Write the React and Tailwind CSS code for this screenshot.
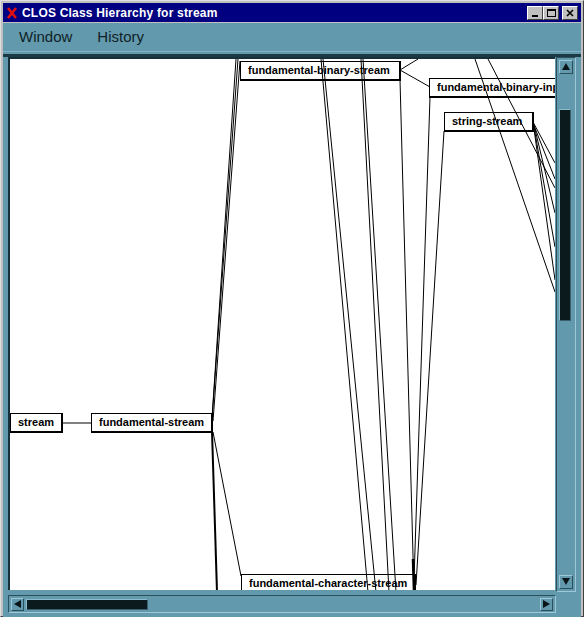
import React from 'react'

const nodes = [
  { label: '', left: 420, top: -20, width: 200 },
  { label: 'stream', left: 0, top: 354, width: 53 },
  { label: 'fundamental-stream', left: 81, top: 354, width: 122 },
  { label: 'fundamental-binary-stream', left: 230, top: 2, width: 161 },
  { label: 'fundamental-binary-input-stream', left: 419, top: 19, width: 200 },
  { label: 'string-stream', left: 434, top: 53, width: 90 },
  { label: 'fundamental-character-stream', left: 231, top: 515, width: 175 },
]

// edges in canvas coordinates
const edges = [
  [202, 359, 226, 0],
  [202, 360, 228, 0],
  [203, 362, 230, 2],
  [202, 372, 207, 533, 2],
  [203, 373, 231, 517],
  [53, 364, 81, 364],
  [311, 0, 358, 533],
  [313, 0, 366, 533],
  [351, 0, 379, 533],
  [353, 0, 386, 533],
  [390, 21, 404, 533],
  [420, 38, 404, 521],
  [434, 72, 406, 526],
  [403, 500, 404, 533, 2.5],
  [390, 11, 408, 0],
  [390, 11, 420, 28],
  [465, 0, 545, 233],
  [478, 0, 545, 129],
  [523, 63, 545, 104],
  [523, 64, 545, 120],
  [524, 66, 545, 154],
  [524, 68, 545, 188],
  [524, 70, 545, 221],
]

function Node({ label, left, top, width }) {
  return (
    <div
      className="absolute h-[20px] bg-white border border-black border-r-2 border-b-2 pl-[7px] flex items-center whitespace-nowrap overflow-hidden text-[11px] font-bold text-black leading-none"
      style={{ left, top, width, fontFamily: '"Liberation Sans", Arial, sans-serif' }}
    >
      {label}
    </div>
  )
}

function Arrow({ dir }) {
  const pts = {
    up: '1,8 5,1 9,8',
    down: '1,1 5,8 9,1',
    right: '1,1 8,5 1,9',
    left: '8,1 1,5 8,9',
  }[dir]
  return (
    <svg width="10" height="10" viewBox="0 0 10 10">
      <polygon points={pts} fill="#0b1418" />
    </svg>
  )
}

function TitleButton({ children }) {
  return (
    <div className="w-[16px] h-[14px] bg-[#c0c0c0] border border-t-white border-l-white border-r-[#404040] border-b-[#404040] flex items-center justify-center">
      {children}
    </div>
  )
}

export default function App() {
  return (
    <div
      className="w-[584px] h-[617px] bg-[#c0c0c0] border border-t-[#dfdfdf] border-l-[#dfdfdf] border-r-[#404040] border-b-[#404040] p-[2px] flex flex-col"
      style={{ fontFamily: '"Liberation Sans", Arial, sans-serif' }}
    >
      {/* title bar */}
      <div className="h-[19px] bg-[#000080] flex items-center pl-[3px] pr-[3px] shrink-0">
        <svg width="12" height="12" viewBox="0 0 12 12" className="mr-[4px]">
          <path d="M2 1 L10 11 M10 1 L2 11" stroke="#e01010" strokeWidth="2.6" />
        </svg>
        <span className="text-white text-[12px] font-bold tracking-[0.2px]">CLOS Class Hierarchy for stream</span>
        <div className="ml-auto flex items-center">
          <TitleButton>
            <div className="w-[6px] h-[2px] bg-black mt-[6px]" />
          </TitleButton>
          <TitleButton>
            <div className="w-[9px] h-[8px] border border-black border-t-2" />
          </TitleButton>
          <div className="w-[3px]" />
          <TitleButton>
            <svg width="8" height="8" viewBox="0 0 8 8">
              <path d="M1 1 L7 7 M7 1 L1 7" stroke="#000" strokeWidth="1.6" />
            </svg>
          </TitleButton>
        </div>
      </div>

      {/* body */}
      <div className="flex-1 mt-[1px] bg-[#6399ad] flex flex-col">
        <div className="h-[29px] flex items-center gap-[25px] pl-[16px] text-[15px] font-medium text-[#0e1f26] shrink-0 border-b border-[#7fb2c4]">
          <span>Window</span>
          <span>History</span>
        </div>

        <div className="mt-[2px] border-t-[3px] border-[#1c3a45] px-[5px] pb-[5px] flex-1 flex flex-col">
          <div className="flex">
            {/* canvas */}
            <div className="relative w-[548px] h-[533px] bg-white border-t-2 border-l-2 border-[#17313b] overflow-hidden">
              {nodes.map((n, i) => (
                <Node key={i} {...n} />
              ))}
              <svg className="absolute left-0 top-0 pointer-events-none" width="546" height="533" viewBox="0 0 546 533">
                {edges.map(([x1, y1, x2, y2, w], i) => (
                  <line key={i} x1={x1} y1={y1} x2={x2} y2={y2} stroke="#000" strokeWidth={w || 1} />
                ))}
              </svg>
            </div>

            {/* vertical scrollbar */}
            <div className="w-[20px] h-[535px] ml-[1px] bg-[#6399ad] border border-t-[#2c4f5c] border-l-[#2c4f5c] border-r-[#9cc8d8] border-b-[#9cc8d8] flex flex-col items-center py-[2px]">
              <div className="w-[14px] h-[14px] flex items-center justify-center border border-t-[#9cc8d8] border-l-[#9cc8d8] border-r-[#2c4f5c] border-b-[#2c4f5c]">
                <Arrow dir="up" />
              </div>
              <div className="w-[14px] flex-1 flex flex-col pt-[35px]">
                <div className="w-[12px] h-[212px] bg-[#0b1a1d] border border-t-[#8cbccc] border-l-[#8cbccc] border-r-[#3a6070] border-b-[#3a6070]" />
              </div>
              <div className="w-[14px] h-[14px] flex items-center justify-center border border-t-[#9cc8d8] border-l-[#9cc8d8] border-r-[#2c4f5c] border-b-[#2c4f5c]">
                <Arrow dir="down" />
              </div>
            </div>
          </div>

          {/* horizontal scrollbar */}
          <div className="w-[548px] h-[18px] mt-[3px] bg-[#6399ad] border border-t-[#2c4f5c] border-l-[#2c4f5c] border-r-[#9cc8d8] border-b-[#9cc8d8] flex items-center px-[2px]">
            <div className="w-[13px] h-[13px] flex items-center justify-center border border-t-[#9cc8d8] border-l-[#9cc8d8] border-r-[#2c4f5c] border-b-[#2c4f5c]">
              <Arrow dir="left" />
            </div>
            <div className="flex-1 h-[13px] flex items-center pl-[2px]">
              <div className="w-[122px] h-[11px] bg-[#0b1a1d] border border-t-[#8cbccc] border-l-[#8cbccc] border-r-[#3a6070] border-b-[#3a6070]" />
            </div>
            <div className="w-[13px] h-[13px] flex items-center justify-center border border-t-[#9cc8d8] border-l-[#9cc8d8] border-r-[#2c4f5c] border-b-[#2c4f5c]">
              <Arrow dir="right" />
            </div>
          </div>
        </div>
      </div>
    </div>
  )
}
